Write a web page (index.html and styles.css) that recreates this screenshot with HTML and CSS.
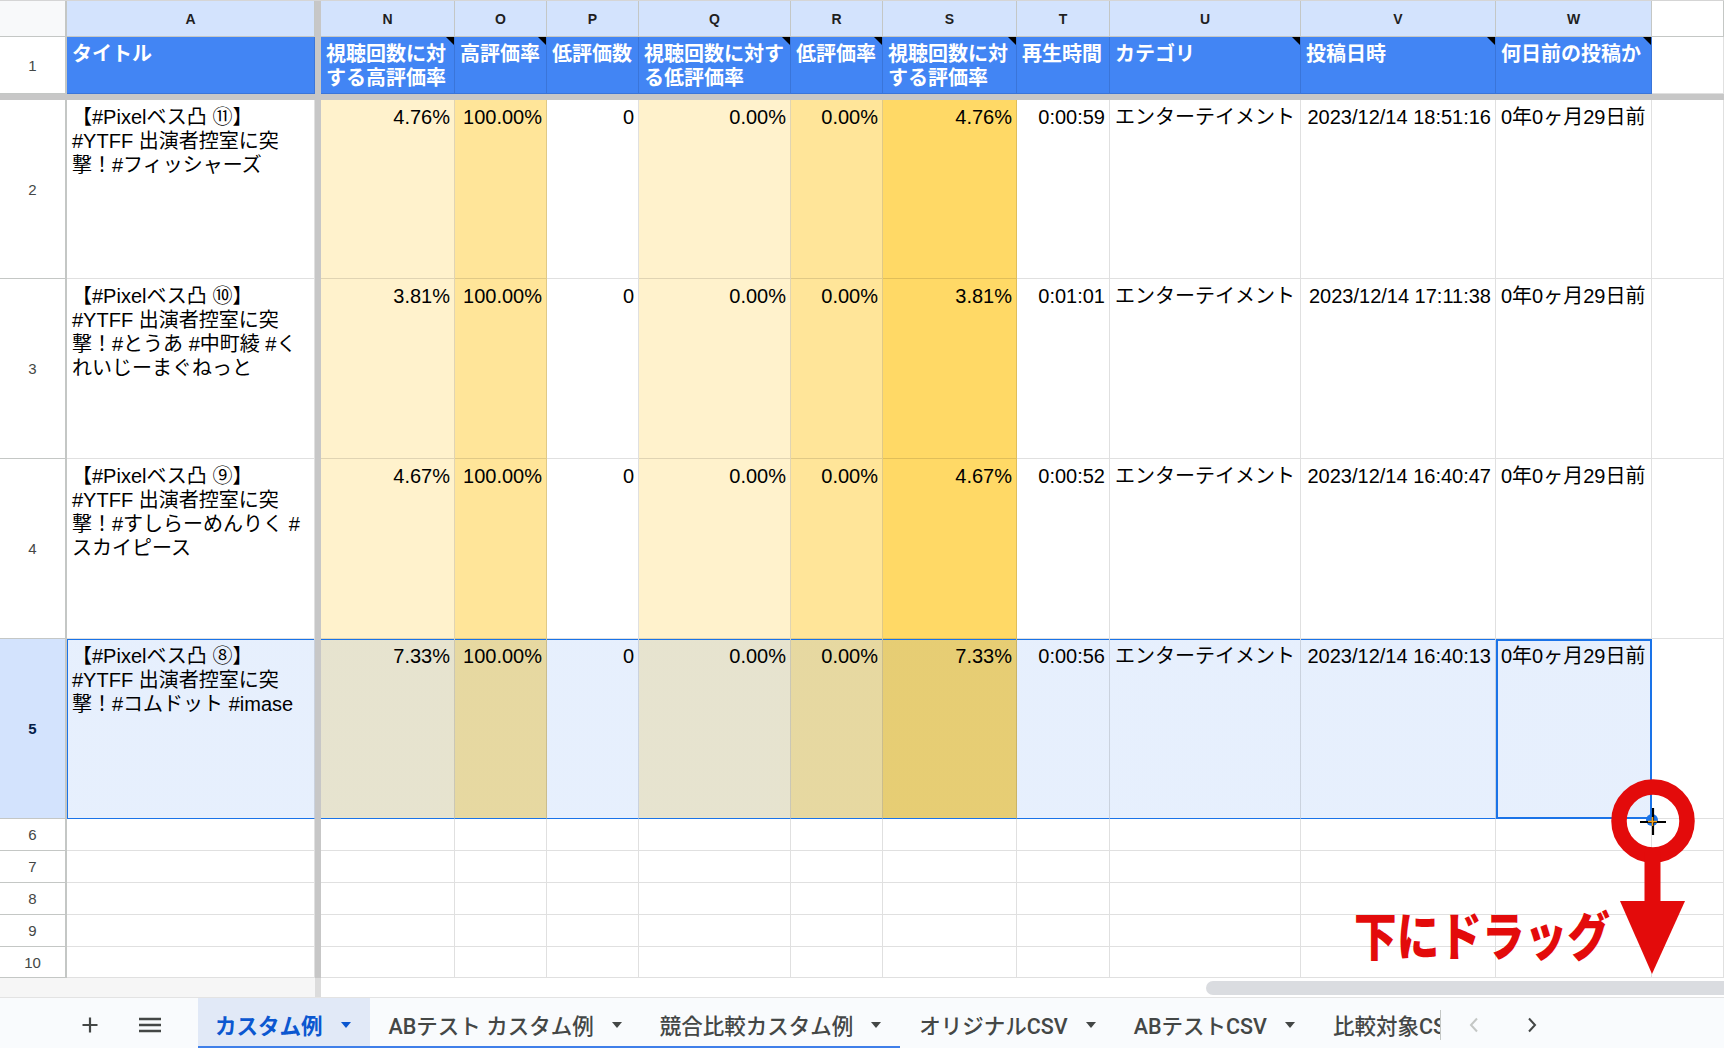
FILE: index.html
```html
<!DOCTYPE html>
<html lang="ja">
<head>
<meta charset="utf-8">
<title>カスタム例 - スプレッドシート</title>
<link rel="stylesheet" href="styles.css">
</head>
<body>
<div class="sheet">
  <div class="row colhdr">
    <div class="rn corner"></div>
    <div class="ch w-a">A</div>
    <div class="fz"></div>
    <div class="ch w-n">N</div>
    <div class="ch w-o">O</div>
    <div class="ch w-p">P</div>
    <div class="ch w-q">Q</div>
    <div class="ch w-r">R</div>
    <div class="ch w-s">S</div>
    <div class="ch w-t">T</div>
    <div class="ch w-u">U</div>
    <div class="ch w-v">V</div>
    <div class="ch w-w">W</div>
    <div class="ch plain w-x"></div>
  </div>

  <div class="row r1">
    <div class="rn">1</div>
    <div class="hd w-a">タイトル</div>
    <div class="fz"></div>
    <div class="hd note w-n">視聴回数に対<br>する高評価率</div>
    <div class="hd note w-o">高評価率</div>
    <div class="hd w-p">低評価数</div>
    <div class="hd note w-q">視聴回数に対す<br>る低評価率</div>
    <div class="hd note w-r">低評価率</div>
    <div class="hd note w-s">視聴回数に対<br>する評価率</div>
    <div class="hd w-t">再生時間</div>
    <div class="hd note w-u">カテゴリ</div>
    <div class="hd note w-v">投稿日時</div>
    <div class="hd note w-w">何日前の投稿か</div>
    <div class="cell w-x"></div>
  </div>

  <div class="frz-row"></div>

  <div class="row data first">
    <div class="rn">2</div>
    <div class="cell w-a">【#Pixelベス凸 ⑪】<br>#YTFF 出演者控室に突<br>撃！#フィッシャーズ</div>
    <div class="fz"></div>
    <div class="cell num y3 w-n">4.76%</div>
    <div class="cell num y2 w-o">100.00%</div>
    <div class="cell num w-p">0</div>
    <div class="cell num y3 w-q">0.00%</div>
    <div class="cell num y2 w-r">0.00%</div>
    <div class="cell num y1 w-s">4.76%</div>
    <div class="cell num w-t">0:00:59</div>
    <div class="cell w-u">エンターテイメント</div>
    <div class="cell num w-v">2023/12/14 18:51:16</div>
    <div class="cell w-w">0年0ヶ月29日前</div>
    <div class="cell w-x"></div>
  </div>

  <div class="row data">
    <div class="rn">3</div>
    <div class="cell w-a">【#Pixelベス凸 ⑩】<br>#YTFF 出演者控室に突<br>撃！#とうあ #中町綾 #く<br>れいじーまぐねっと</div>
    <div class="fz"></div>
    <div class="cell num y3 w-n">3.81%</div>
    <div class="cell num y2 w-o">100.00%</div>
    <div class="cell num w-p">0</div>
    <div class="cell num y3 w-q">0.00%</div>
    <div class="cell num y2 w-r">0.00%</div>
    <div class="cell num y1 w-s">3.81%</div>
    <div class="cell num w-t">0:01:01</div>
    <div class="cell w-u">エンターテイメント</div>
    <div class="cell num w-v">2023/12/14 17:11:38</div>
    <div class="cell w-w">0年0ヶ月29日前</div>
    <div class="cell w-x"></div>
  </div>

  <div class="row data">
    <div class="rn">4</div>
    <div class="cell w-a">【#Pixelベス凸 ⑨】<br>#YTFF 出演者控室に突<br>撃！#すしらーめんりく #<br>スカイピース</div>
    <div class="fz"></div>
    <div class="cell num y3 w-n">4.67%</div>
    <div class="cell num y2 w-o">100.00%</div>
    <div class="cell num w-p">0</div>
    <div class="cell num y3 w-q">0.00%</div>
    <div class="cell num y2 w-r">0.00%</div>
    <div class="cell num y1 w-s">4.67%</div>
    <div class="cell num w-t">0:00:52</div>
    <div class="cell w-u">エンターテイメント</div>
    <div class="cell num w-v">2023/12/14 16:40:47</div>
    <div class="cell w-w">0年0ヶ月29日前</div>
    <div class="cell w-x"></div>
  </div>

  <div class="row data">
    <div class="rn selrn">5</div>
    <div class="cell sel lead w-a">【#Pixelベス凸 ⑧】<br>#YTFF 出演者控室に突<br>撃！#コムドット #imase</div>
    <div class="fz"></div>
    <div class="cell num sel y3 w-n">7.33%</div>
    <div class="cell num sel y2 w-o">100.00%</div>
    <div class="cell num sel w-p">0</div>
    <div class="cell num sel y3 w-q">0.00%</div>
    <div class="cell num sel y2 w-r">0.00%</div>
    <div class="cell num sel y1 w-s">7.33%</div>
    <div class="cell num sel w-t">0:00:56</div>
    <div class="cell sel w-u">エンターテイメント</div>
    <div class="cell num sel w-v">2023/12/14 16:40:13</div>
    <div class="cell sel active w-w">0年0ヶ月29日前</div>
    <div class="cell w-x"></div>
  </div>

  <div class="row empty">
    <div class="rn">6</div>
    <div class="cell w-a"></div><div class="fz"></div>
    <div class="cell w-n"></div><div class="cell w-o"></div><div class="cell w-p"></div><div class="cell w-q"></div><div class="cell w-r"></div><div class="cell w-s"></div><div class="cell w-t"></div><div class="cell w-u"></div><div class="cell w-v"></div><div class="cell w-w"></div><div class="cell w-x"></div>
  </div>
  <div class="row empty">
    <div class="rn">7</div>
    <div class="cell w-a"></div><div class="fz"></div>
    <div class="cell w-n"></div><div class="cell w-o"></div><div class="cell w-p"></div><div class="cell w-q"></div><div class="cell w-r"></div><div class="cell w-s"></div><div class="cell w-t"></div><div class="cell w-u"></div><div class="cell w-v"></div><div class="cell w-w"></div><div class="cell w-x"></div>
  </div>
  <div class="row empty">
    <div class="rn">8</div>
    <div class="cell w-a"></div><div class="fz"></div>
    <div class="cell w-n"></div><div class="cell w-o"></div><div class="cell w-p"></div><div class="cell w-q"></div><div class="cell w-r"></div><div class="cell w-s"></div><div class="cell w-t"></div><div class="cell w-u"></div><div class="cell w-v"></div><div class="cell w-w"></div><div class="cell w-x"></div>
  </div>
  <div class="row empty">
    <div class="rn">9</div>
    <div class="cell w-a"></div><div class="fz"></div>
    <div class="cell w-n"></div><div class="cell w-o"></div><div class="cell w-p"></div><div class="cell w-q"></div><div class="cell w-r"></div><div class="cell w-s"></div><div class="cell w-t"></div><div class="cell w-u"></div><div class="cell w-v"></div><div class="cell w-w"></div><div class="cell w-x"></div>
  </div>
  <div class="row empty last">
    <div class="rn">10</div>
    <div class="cell w-a"></div><div class="fz"></div>
    <div class="cell w-n"></div><div class="cell w-o"></div><div class="cell w-p"></div><div class="cell w-q"></div><div class="cell w-r"></div><div class="cell w-s"></div><div class="cell w-t"></div><div class="cell w-u"></div><div class="cell w-v"></div><div class="cell w-w"></div><div class="cell w-x"></div>
  </div>

  <div class="row scrollrow">
    <div class="sc-left"></div>
    <div class="fz lt"></div>
    <div class="sc-track w-x"><div class="sc-thumb"></div></div>
  </div>
</div>

<div class="tabbar">
  <div class="tb-btn">
    <svg width="18" height="18" viewBox="0 0 18 18"><path d="M9 1.5v15M1.5 9h15" stroke="#444746" stroke-width="2.2" fill="none"/></svg>
  </div>
  <div class="tb-btn">
    <svg width="22" height="16" viewBox="0 0 22 16"><path d="M0 2h22M0 8h22M0 14h22" stroke="#444746" stroke-width="2.4" fill="none"/></svg>
  </div>
  <div class="tabs">
    <div class="tab active ul"><span>カスタム例</span><svg class="dd" width="10" height="6" viewBox="0 0 10 6"><path d="M0 0h10L5 6z"/></svg></div>
    <div class="tab ul"><span>ABテスト カスタム例</span><svg class="dd" width="10" height="6" viewBox="0 0 10 6"><path d="M0 0h10L5 6z"/></svg></div>
    <div class="tab ul"><span>競合比較カスタム例</span><svg class="dd" width="10" height="6" viewBox="0 0 10 6"><path d="M0 0h10L5 6z"/></svg></div>
    <div class="tab"><span>オリジナルCSV</span><svg class="dd" width="10" height="6" viewBox="0 0 10 6"><path d="M0 0h10L5 6z"/></svg></div>
    <div class="tab"><span>ABテストCSV</span><svg class="dd" width="10" height="6" viewBox="0 0 10 6"><path d="M0 0h10L5 6z"/></svg></div>
    <div class="tab"><span>比較対象CSV</span><svg class="dd" width="10" height="6" viewBox="0 0 10 6"><path d="M0 0h10L5 6z"/></svg></div>
  </div>
  <div class="tdiv"></div>
  <div class="nav">
    <svg width="10" height="16" viewBox="0 0 10 16"><path d="M8 1.5L2 8l6 6.5" stroke="#c4c7c5" stroke-width="2" fill="none"/></svg>
  </div>
  <div class="nav">
    <svg width="10" height="16" viewBox="0 0 10 16"><path d="M2 1.5L8 8l-6 6.5" stroke="#444746" stroke-width="2" fill="none"/></svg>
  </div>
</div>

<svg class="annot" width="384" height="230" viewBox="1340 770 384 230">
  <circle cx="1653" cy="821" r="34" fill="none" stroke="#e30b0b" stroke-width="15.5"/>
  <rect x="1644.5" y="852" width="16" height="52" fill="#e30b0b"/>
  <polygon points="1620,901 1685,901 1652,974" fill="#e30b0b"/>
  <circle cx="1652" cy="820" r="6" fill="#1a73e8"/>
  <path d="M1640 822h26M1653 808v27" stroke="#000" stroke-width="2.2" fill="none"/>
  <path d="M1648 821.5h9M1652.5 817v9" stroke="#f6a21a" stroke-width="1.6" fill="none"/>
</svg>
<div class="drag">下にドラッグ</div>
</body>
</html>
```

FILE: styles.css
```css
* { box-sizing: border-box; margin: 0; padding: 0; }
html, body { width: 1724px; height: 1048px; overflow: hidden; background: #fff; }
body {
  position: relative;
  font-family: "Liberation Sans", "Noto Sans CJK JP", sans-serif;
  color: #000;
}

.sheet { display: flex; flex-direction: column; }
.row { display: flex; flex: none; }
.row > * { flex: none; }

.w-a { width: 248px; }
.w-n { width: 134px; }
.w-o { width: 92px; }
.w-p { width: 92px; }
.w-q { width: 152px; }
.w-r { width: 92px; }
.w-s { width: 134px; }
.w-t { width: 93px; }
.w-u { width: 191px; }
.w-v { width: 195px; }
.w-w { width: 156px; }
.row > .w-x { flex: 1 1 auto; }

.fz { width: 6px; background: #c7c7c7; }
.fz.lt { background: #dcdcdc; }

/* row numbers */
.rn {
  width: 67px;
  border-right: 2px solid #c4c7c5;
  border-bottom: 1px solid #c4c7c5;
  display: flex;
  align-items: center;
  justify-content: center;
  font-size: 15px;
  color: #444746;
  background: #fff;
}
.corner { background: #f8f9fa; }
.rn.selrn { background: #d3e3fd; color: #041e49; font-weight: bold; }

/* column letters */
.colhdr { height: 37px; border-top: 1px solid #d5d5d5; }
.ch {
  background: #d3e3fd;
  border-right: 1px solid #c4c7c5;
  border-bottom: 1px solid #c4c7c5;
  display: flex;
  align-items: center;
  justify-content: center;
  font-size: 14px;
  font-weight: bold;
  color: #1f1f1f;
}
.ch.plain { background: #fff; }

/* header row */
.r1 { height: 57px; }
.hd {
  background: #4285f4;
  color: #fff;
  font-weight: bold;
  font-size: 20px;
  line-height: 24px;
  padding: 5px 4px 0 5px;
  border-right: 1px solid #3a75d9;
  border-bottom: 1px solid #3a75d9;
  white-space: nowrap;
  overflow: hidden;
  position: relative;
}
.note::after {
  content: "";
  position: absolute;
  top: 0;
  right: 0;
  border-top: 8px solid #000;
  border-left: 8px solid transparent;
}

.frz-row { height: 6px; background: #c7c7c7; flex: none; }

/* data cells */
.data { height: 180px; }
.data.first { height: 179px; }
.empty { height: 32px; }
.empty.last { height: 31px; }

.cell {
  border-right: 1px solid rgba(0, 0, 0, 0.12);
  border-bottom: 1px solid rgba(0, 0, 0, 0.12);
  font-size: 20px;
  line-height: 24px;
  padding: 5px 4px 0 5px;
  white-space: nowrap;
  overflow: hidden;
  background-color: #fff;
}
.num { text-align: right; }
.y1 { background-color: #ffd966; }
.y2 { background-color: #ffe599; }
.y3 { background-color: #fff2cc; }

.sel {
  background-image: linear-gradient(rgba(14, 101, 235, 0.1), rgba(14, 101, 235, 0.1));
  border-bottom-color: #1a73e8;
  box-shadow: inset 0 1px 0 #1a73e8;
}
.sel.lead { box-shadow: inset 1px 1px 0 #1a73e8; }
.sel.active {
  border-right-color: #1a73e8;
  box-shadow: inset 2px 2px 0 #1a73e8, inset -1px -1px 0 #1a73e8;
}

/* scroll row */
.scrollrow { height: 19px; }
.sc-left { width: 315px; background: #f6f6f6; }
.sc-track { padding: 3px 0 0 885px; background: #fff; }
.sc-thumb { height: 14px; background: #dadce0; border-radius: 7px 0 0 7px; }

/* tab bar */
.tabbar {
  height: 51px;
  display: flex;
  align-items: stretch;
  padding-left: 70px;
  background: #f9fbfd;
  border-top: 1px solid #e3e3e3;
  font-family: "Roboto", "Noto Sans CJK JP", sans-serif;
}
.tb-btn {
  width: 40px;
  display: flex;
  align-items: center;
  justify-content: center;
  padding-top: 3px;
}
.tb-btn + .tb-btn { margin-left: 20px; }
.tabs {
  margin-left: 28px;
  width: 1242px;
  display: flex;
  overflow: hidden;
  flex: none;
}
.tab {
  flex: none;
  display: flex;
  align-items: center;
  gap: 18px;
  padding: 3px 19px 0 17px;
  font-size: 21.5px;
  font-weight: 500;
  color: #444746;
  white-space: nowrap;
}
.tab + .tab { padding-left: 19px; }
.tab .dd { fill: #444746; flex: none; }
.tab.active { background: #e1e9f7; color: #0b57d0; font-weight: bold; }
.tab.active .dd { fill: #0b57d0; }
.tab.ul { box-shadow: inset 0 -2px 0 #3f7fe9; }
.tdiv { width: 1px; height: 30px; align-self: center; margin-top: 3px; background: #c4c7c5; flex: none; }
.nav {
  width: 36px;
  display: flex;
  align-items: center;
  justify-content: center;
  padding-top: 3px;
  margin-left: 15px;
}
.nav + .nav { margin-left: 22px; }

/* annotation overlay */
.annot { position: absolute; left: 1340px; top: 770px; }
.drag {
  position: absolute;
  left: 1354px;
  top: 908px;
  font-family: "Noto Sans CJK JP", sans-serif;
  font-weight: 900;
  font-size: 52px;
  line-height: 1;
  color: #e30b0b;
  white-space: nowrap;
  transform: scaleX(0.82);
  transform-origin: 0 0;
}
```
